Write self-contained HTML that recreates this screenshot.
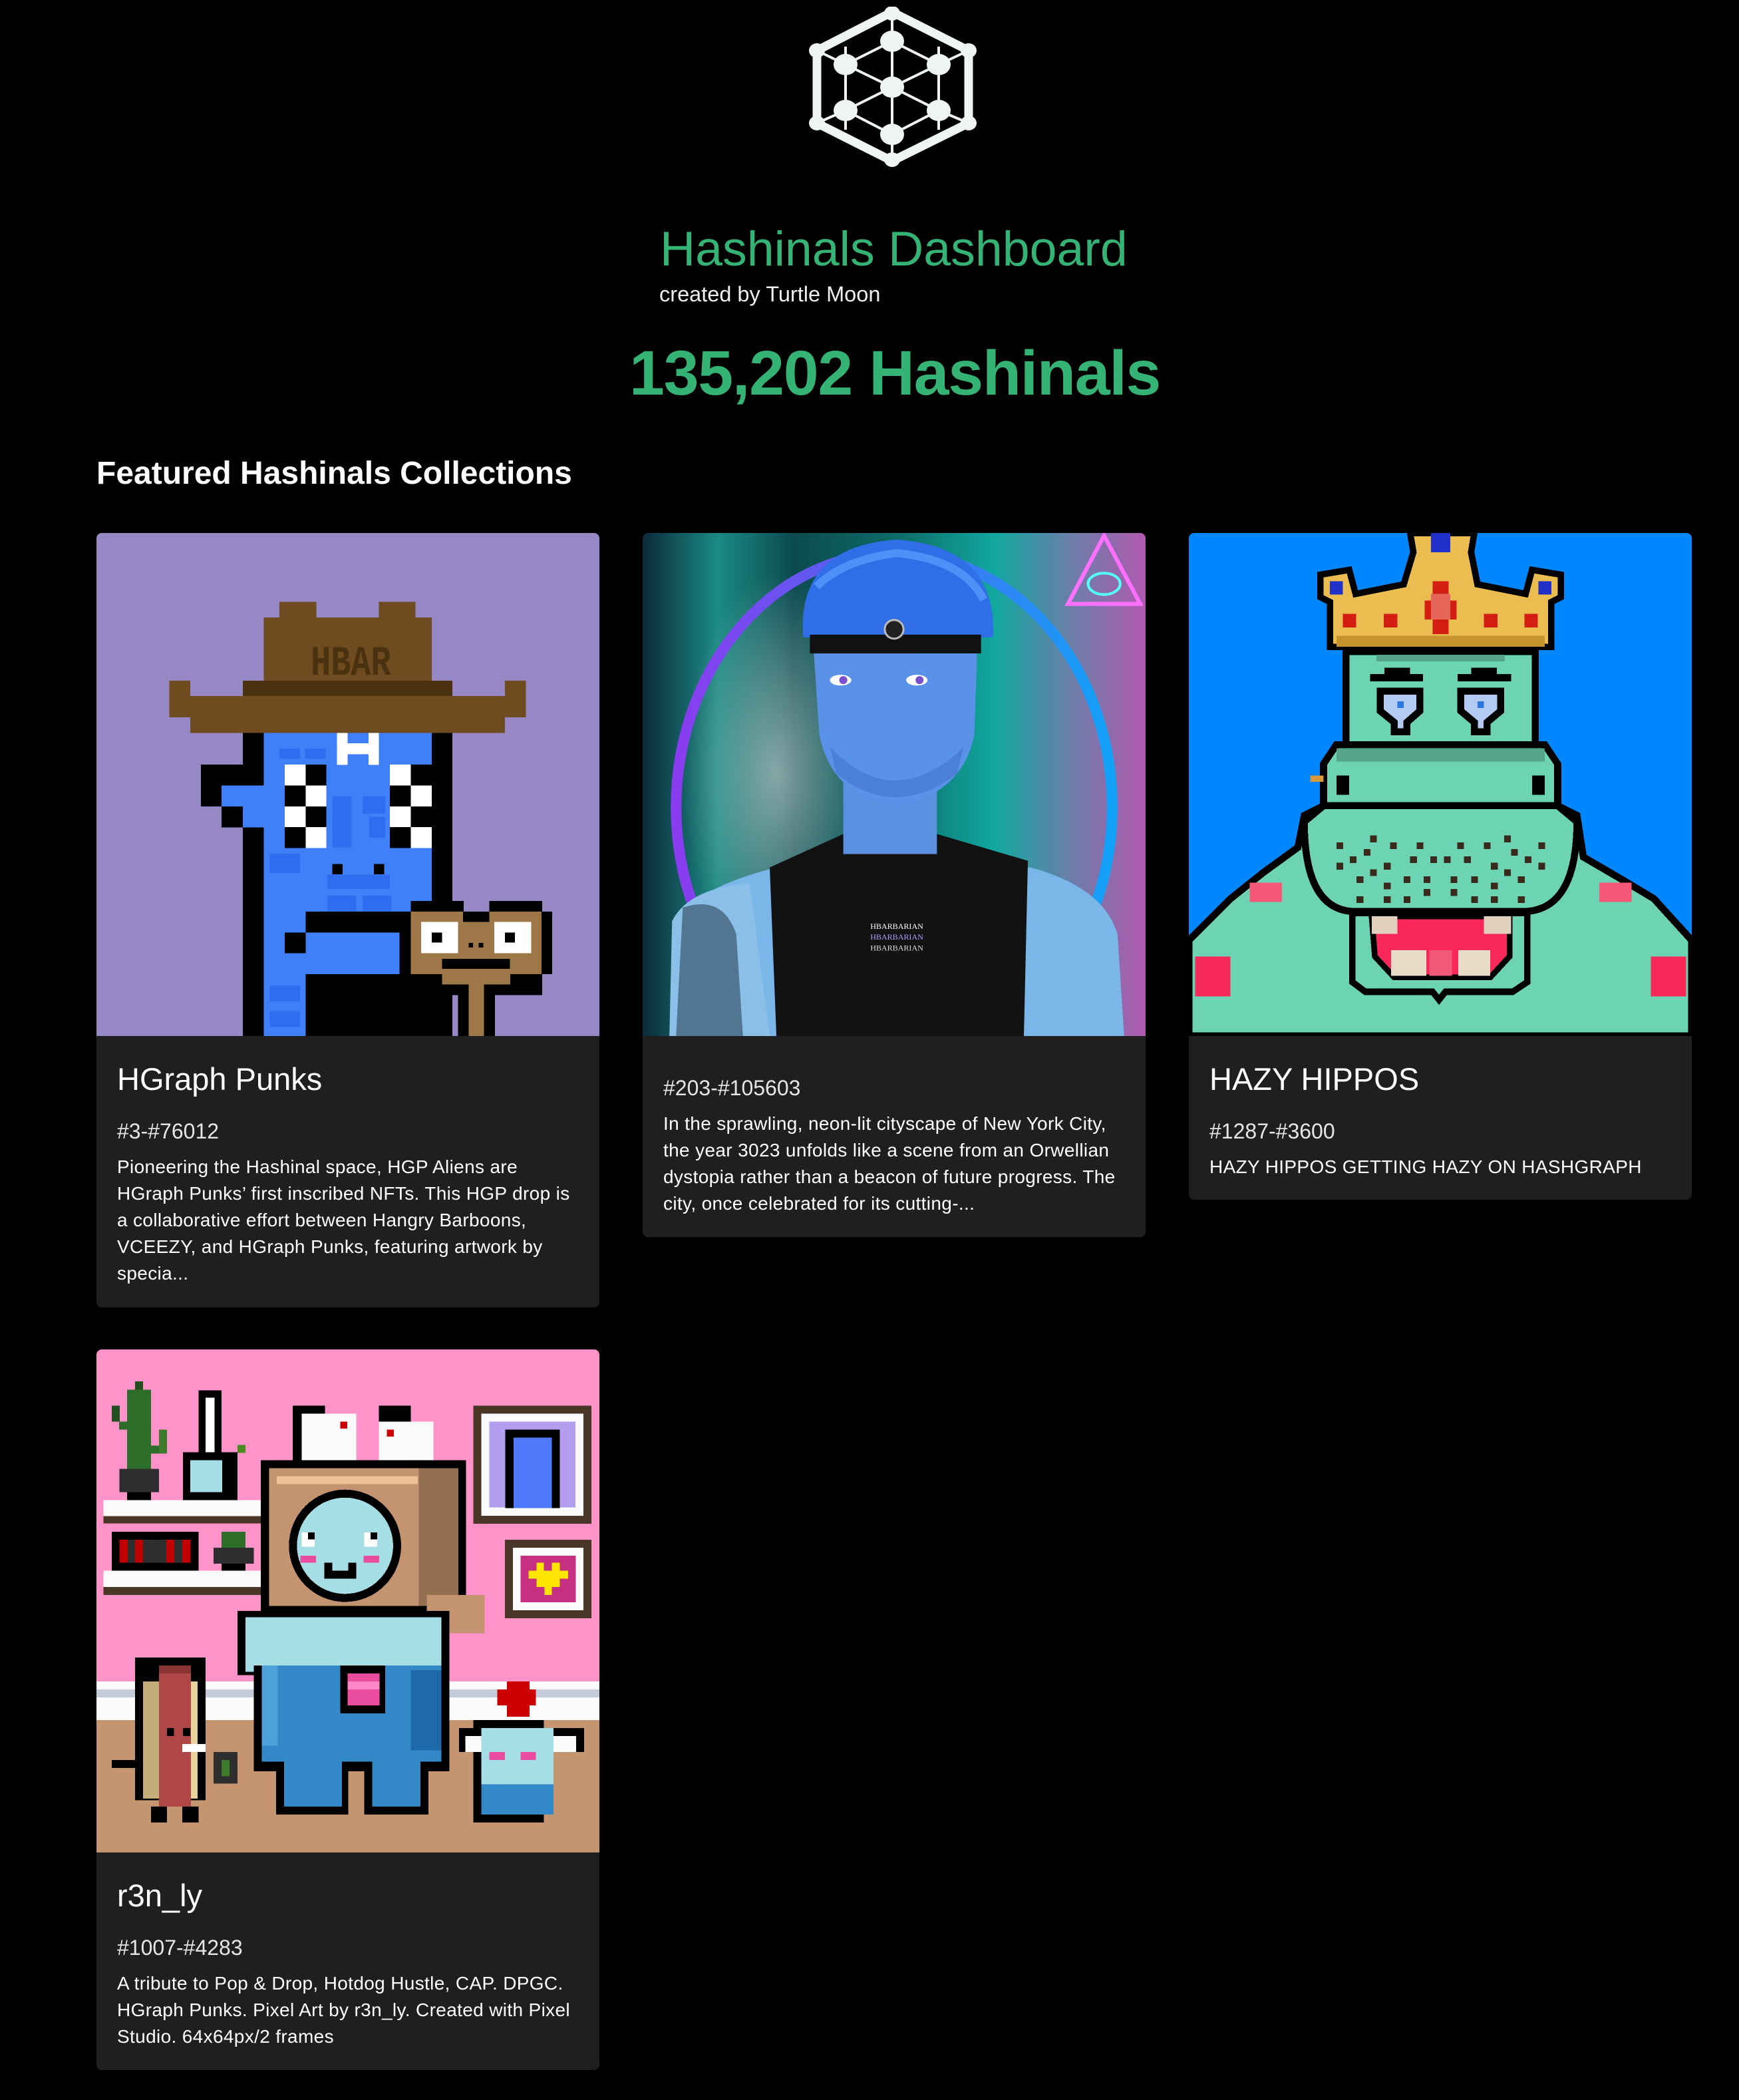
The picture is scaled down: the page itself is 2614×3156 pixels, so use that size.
<!DOCTYPE html>
<html><head><meta charset="utf-8">
<style>
*{margin:0;padding:0;box-sizing:border-box}
html,body{width:2614px;height:3156px;background:#000;overflow:hidden}
body{position:relative;font-family:"Liberation Sans",Arial,sans-serif;color:#fff}
.abs{position:absolute;line-height:1;white-space:nowrap}
.card{position:absolute;width:756px;background:#1f1f1f;border-radius:8px;overflow:hidden}
.card svg{display:block;width:756px;height:756px}
.name{position:absolute;left:31px;top:797px;font-size:47px;line-height:1;white-space:nowrap}
.id{position:absolute;left:31px;top:883px;font-size:32px;line-height:1;color:#e6e6e6;white-space:nowrap}
.desc{position:absolute;left:31px;top:933px;font-size:28px;letter-spacing:0.35px;line-height:40px;white-space:nowrap}
</style></head><body>

<svg class="abs" style="left:1216px;top:10px" width="255" height="242" viewBox="0 0 255 242">
<g stroke="#eef4ef" fill="none">
<g stroke-width="13" stroke-linecap="butt">
<line x1="125" y1="8" x2="12" y2="66"/><line x1="125" y1="8" x2="240" y2="66"/>
<line x1="12" y1="66" x2="12" y2="175"/><line x1="240" y1="66" x2="240" y2="175"/>
<line x1="12" y1="175" x2="125" y2="232"/><line x1="240" y1="175" x2="125" y2="232"/>
</g>
<g stroke-width="4">
<line x1="125" y1="8" x2="125" y2="232"/>
<line x1="55" y1="87" x2="125" y2="52"/><line x1="195" y1="87" x2="125" y2="52"/>
<line x1="55" y1="87" x2="125" y2="121"/><line x1="195" y1="87" x2="125" y2="121"/>
<line x1="55" y1="156" x2="125" y2="121"/><line x1="195" y1="156" x2="125" y2="121"/>
<line x1="55" y1="156" x2="125" y2="192"/><line x1="195" y1="156" x2="125" y2="192"/>
<line x1="55" y1="87" x2="55" y2="156"/><line x1="195" y1="87" x2="195" y2="156"/>
<line x1="12" y1="66" x2="55" y2="87"/><line x1="240" y1="66" x2="195" y2="87"/>
<line x1="12" y1="175" x2="55" y2="156"/><line x1="240" y1="175" x2="195" y2="156"/>
<line x1="55" y1="60" x2="55" y2="87"/><line x1="195" y1="60" x2="195" y2="87"/>
<line x1="55" y1="156" x2="55" y2="185"/><line x1="195" y1="156" x2="195" y2="185"/>
</g></g>
<g fill="#eef4ef">
<ellipse cx="125" cy="10" rx="12" ry="11"/><ellipse cx="12" cy="66" rx="12" ry="11"/><ellipse cx="240" cy="66" rx="12" ry="11"/>
<ellipse cx="12" cy="175" rx="12" ry="11"/><ellipse cx="240" cy="175" rx="12" ry="11"/><ellipse cx="125" cy="230" rx="12" ry="11"/>
<ellipse cx="125" cy="52" rx="18" ry="16"/><ellipse cx="55" cy="87" rx="18" ry="16"/><ellipse cx="195" cy="87" rx="18" ry="16"/>
<ellipse cx="125" cy="121" rx="18" ry="16"/><ellipse cx="55" cy="156" rx="18" ry="16"/><ellipse cx="195" cy="156" rx="18" ry="16"/>
<ellipse cx="125" cy="192" rx="18" ry="16"/>
</g></svg>

<div class="abs" style="left:992px;top:337px;font-size:73.5px;color:#35b374">Hashinals Dashboard</div>
<div class="abs" style="left:991px;top:426px;font-size:32.5px;color:#f0f0f0">created by Turtle Moon</div>
<div class="abs" style="left:946px;top:514px;font-size:95px;font-weight:bold;color:#35b374;letter-spacing:-1.2px">135,202 Hashinals</div>
<div class="abs" style="left:145px;top:688px;font-size:48px;font-weight:bold">Featured Hashinals Collections</div>

<!-- Card 1 -->
<div class="card" style="left:145px;top:801px;height:1164px">
<svg viewBox="0 0 1568 1568" shape-rendering="crispEdges">
<rect width="1568" height="1568" fill="#9688c5"/>
<rect x="570" y="215" width="115" height="60" fill="#6f4c20"/><rect x="880" y="215" width="115" height="60" fill="#6f4c20"/>
<rect x="522" y="263" width="523" height="200" fill="#6f4c20"/>
<text x="668" y="442" font-family="Liberation Mono,monospace" font-weight="bold" font-size="130" fill="#4a3210" textLength="250" lengthAdjust="spacingAndGlyphs">HBAR</text>
<rect x="456" y="460" width="654" height="50" fill="#4a3210"/>
<rect x="227" y="460" width="65" height="115" fill="#6f4c20"/><rect x="1273" y="460" width="66" height="115" fill="#6f4c20"/>
<rect x="227" y="508" width="1112" height="67" fill="#6f4c20"/><rect x="292" y="560" width="981" height="63" fill="#6f4c20"/>
<rect x="456" y="623" width="654" height="945" fill="#000"/>
<rect x="326" y="722" width="200" height="130" fill="#000"/><rect x="390" y="850" width="70" height="68" fill="#000"/>
<rect x="390" y="787" width="136" height="65" fill="#3f7ff8"/><rect x="456" y="850" width="70" height="68" fill="#3f7ff8"/>
<rect x="522" y="623" width="523" height="560" fill="#3f7ff8"/>
<rect x="522" y="1180" width="130" height="388" fill="#3f7ff8"/>
<rect x="652" y="1245" width="295" height="130" fill="#3f7ff8"/>
<g fill="#2f6cf0"><rect x="570" y="672" width="65" height="32"/><rect x="650" y="672" width="65" height="32"/><rect x="735" y="820" width="60" height="160"/><rect x="830" y="820" width="70" height="55"/><rect x="850" y="885" width="50" height="65"/><rect x="540" y="1000" width="95" height="60"/><rect x="720" y="1065" width="195" height="45"/><rect x="540" y="1410" width="95" height="50"/><rect x="540" y="1490" width="95" height="50"/><rect x="720" y="1130" width="90" height="50"/><rect x="830" y="1130" width="90" height="50"/></g>
<rect x="750" y="623" width="130" height="100" fill="#fff"/><rect x="783" y="623" width="65" height="32" fill="#3f7ff8"/><rect x="783" y="690" width="65" height="33" fill="#3f7ff8"/>
<g fill="#fff"><rect x="587" y="722" width="65" height="65"/><rect x="652" y="787" width="65" height="65"/><rect x="587" y="852" width="65" height="65"/><rect x="652" y="917" width="65" height="65"/>
<rect x="915" y="722" width="65" height="65"/><rect x="980" y="787" width="65" height="65"/><rect x="915" y="852" width="65" height="65"/><rect x="980" y="917" width="65" height="65"/></g>
<g fill="#000"><rect x="652" y="722" width="65" height="65"/><rect x="587" y="787" width="65" height="65"/><rect x="652" y="852" width="65" height="65"/><rect x="587" y="917" width="65" height="65"/>
<rect x="980" y="722" width="65" height="65"/><rect x="915" y="787" width="65" height="65"/><rect x="980" y="852" width="65" height="65"/><rect x="915" y="917" width="65" height="65"/>
<rect x="735" y="1032" width="32" height="32"/><rect x="865" y="1032" width="32" height="32"/>
<rect x="652" y="1180" width="330" height="65"/><rect x="587" y="1245" width="65" height="65"/>
<rect x="652" y="1375" width="330" height="65"/><rect x="652" y="1440" width="65" height="128"/>
<rect x="945" y="1245" width="40" height="140"/>
<rect x="980" y="1147" width="165" height="35"/><rect x="1225" y="1147" width="165" height="35"/>
<rect x="1388" y="1180" width="33" height="195"/>
<rect x="1127" y="1405" width="115" height="163"/><rect x="1077" y="1375" width="50" height="65"/><rect x="1240" y="1375" width="150" height="65"/></g>
<rect x="980" y="1180" width="408" height="195" fill="#9e7748"/>
<rect x="1143" y="1180" width="82" height="32" fill="#000"/>
<rect x="1077" y="1375" width="213" height="32" fill="#9e7748"/>
<rect x="1160" y="1405" width="48" height="163" fill="#9e7748"/>
<rect x="1012" y="1212" width="115" height="98" fill="#fff"/><rect x="1240" y="1212" width="115" height="98" fill="#fff"/>
<rect x="1045" y="1245" width="32" height="32" fill="#000"/><rect x="1273" y="1245" width="32" height="32" fill="#000"/>
<rect x="1077" y="1327" width="212" height="32" fill="#000"/>
<rect x="1160" y="1278" width="14" height="14" fill="#000"/><rect x="1192" y="1278" width="14" height="14" fill="#000"/>
</svg>
<div class="name">HGraph Punks</div>
<div class="id">#3-#76012</div>
<div class="desc">Pioneering the Hashinal space, HGP Aliens are<br>HGraph Punks’ first inscribed NFTs. This HGP drop is<br>a collaborative effort between Hangry Barboons,<br>VCEEZY, and HGraph Punks, featuring artwork by<br>specia...</div>
</div>

<!-- Card 2 -->
<div class="card" style="left:966px;top:801px;height:1058px">
<svg viewBox="0 0 376 376">
<defs>
<linearGradient id="bg2" x1="0" x2="1" y1="0" y2="0">
<stop offset="0" stop-color="#0c2a3a"/><stop offset=".15" stop-color="#1a8b84"/><stop offset=".3" stop-color="#0b4a4f"/><stop offset=".5" stop-color="#0d6a66"/><stop offset=".7" stop-color="#11a8a0"/><stop offset=".85" stop-color="#6a7fa8"/><stop offset="1" stop-color="#b05ab0"/></linearGradient>
<linearGradient id="ring" x1="0" x2="1"><stop offset="0" stop-color="#8a3cf0"/><stop offset=".5" stop-color="#4a6af0"/><stop offset="1" stop-color="#12a2f8"/></linearGradient>
<radialGradient id="glow" cx=".5" cy=".5" r=".5"><stop offset="0" stop-color="#b8c8c8" stop-opacity=".7"/><stop offset="1" stop-color="#b8c8c8" stop-opacity="0"/></radialGradient>
</defs>
<rect width="376" height="376" fill="url(#bg2)"/>
<ellipse cx="100" cy="180" rx="70" ry="150" fill="url(#glow)"/>
<ellipse cx="188" cy="205" rx="163" ry="190" fill="none" stroke="url(#ring)" stroke-width="8"/>
<path d="M20 376 L25 290 Q40 265 100 250 L290 250 Q345 265 355 300 L360 376Z" fill="#7ab6e8"/>
<path d="M95 250 L150 225 L220 225 L288 245 L285 376 L100 376Z" fill="#121212"/>
<path d="M20 376 L22 290 Q35 265 80 262 L95 376Z" fill="#8ac0e8"/>
<text x="190" y="296" font-size="6" fill="#fff" text-anchor="middle" font-family="Liberation Serif,serif">HBARBARIAN</text>
<text x="190" y="304" font-size="6" fill="#a8a0ff" text-anchor="middle" font-family="Liberation Serif,serif">HBARBARIAN</text>
<text x="190" y="312" font-size="6" fill="#ddd" text-anchor="middle" font-family="Liberation Serif,serif">HBARBARIAN</text>
<rect x="150" y="180" width="70" height="60" fill="#5b8fe0"/>
<path d="M128 90 L250 90 L248 150 Q240 195 188 205 Q140 195 132 150Z" fill="#5a92e8"/>
<path d="M140 160 Q188 210 240 160 L235 180 Q188 215 145 180Z" fill="#4c7fd6"/>
<ellipse cx="148" cy="110" rx="8" ry="4" fill="#fff"/><ellipse cx="205" cy="110" rx="8" ry="4" fill="#fff"/>
<circle cx="150" cy="110" r="3" fill="#7a4fd0"/><circle cx="207" cy="110" r="3" fill="#7a4fd0"/>
<path d="M120 78 Q115 10 190 5 Q265 10 262 78 Z" fill="#2f6ee6"/>
<path d="M130 40 Q150 20 190 15 Q240 20 255 50" stroke="#4f8ff8" stroke-width="6" fill="none"/>
<rect x="125" y="76" width="128" height="14" fill="#111"/>
<circle cx="188" cy="72" r="7" fill="#222" stroke="#bbb" stroke-width="1.5"/>
<path d="M345 2 L372 53 L318 53Z" fill="none" stroke="#ff70ff" stroke-width="3"/>
<ellipse cx="345" cy="38" rx="12" ry="8" fill="none" stroke="#5ff" stroke-width="2"/>
<path d="M30 280 Q60 270 70 300 L75 376 L25 376Z" fill="#1a2a3a" opacity=".5"/>
</svg>
<div class="id" style="top:818px">#203-#105603</div>
<div class="desc" style="top:868px">In the sprawling, neon-lit cityscape of New York City,<br>the year 3023 unfolds like a scene from an Orwellian<br>dystopia rather than a beacon of future progress. The<br>city, once celebrated for its cutting-...</div>
</div>

<!-- Card 3 -->
<div class="card" style="left:1787px;top:801px;height:1002px">
<svg viewBox="0 0 1568 1568" shape-rendering="crispEdges">
<rect width="1568" height="1568" fill="#0086ff"/>
<path d="M0 1270 L130 1140 L230 1060 L340 980 L360 880 L420 850 L420 720 L460 660 L1110 660 L1150 720 L1150 850 L1210 880 L1230 1010 L1350 1080 L1450 1140 L1568 1270 L1568 1568 L0 1568Z" fill="#6cd4b2" stroke="#000" stroke-width="22"/>
<path d="M360 900 Q360 1180 520 1180 L1040 1180 Q1210 1180 1210 900 L1150 850 L420 850Z" fill="#6cd4b2" stroke="#000" stroke-width="22"/>
<rect x="460" y="672" width="650" height="40" fill="#55a58a"/>
<rect x="490" y="370" width="590" height="290" fill="#6cd4b2" stroke="#000" stroke-width="22"/>
<rect x="585" y="380" width="400" height="20" fill="#55a58a"/>
<rect x="565" y="440" width="165" height="22" fill="#000"/><rect x="610" y="420" width="80" height="22" fill="#000"/>
<rect x="838" y="440" width="167" height="22" fill="#000"/><rect x="880" y="420" width="80" height="22" fill="#000"/>
<path d="M597 493 L720 493 L720 555 L680 590 L680 620 L640 620 L640 590 L597 555Z" fill="#b3cbf3" stroke="#000" stroke-width="22"/>
<path d="M848 493 L972 493 L972 555 L930 590 L930 620 L890 620 L890 590 L848 555Z" fill="#b3cbf3" stroke="#000" stroke-width="22"/>
<rect x="650" y="525" width="20" height="20" fill="#2a78e0"/><rect x="900" y="525" width="20" height="20" fill="#2a78e0"/>
<path d="M440 355 L440 215 L410 200 L410 130 L500 115 L520 190 L670 160 L700 60 L690 0 L890 0 L880 60 L900 160 L1050 190 L1070 115 L1160 130 L1160 200 L1130 215 L1130 355Z" fill="#ebbd50" stroke="#000" stroke-width="20"/>
<rect x="460" y="320" width="650" height="35" fill="#c6922a"/>
<path d="M760 150 L810 150 L810 210 L835 210 L835 270 L810 270 L810 315 L760 315 L760 270 L735 270 L735 210 L760 210Z" fill="#d41e14"/>
<rect x="755" y="190" width="60" height="80" fill="#e6675a"/>
<g fill="#d41e14"><rect x="480" y="252" width="42" height="42"/><rect x="608" y="252" width="42" height="42"/><rect x="920" y="252" width="42" height="42"/><rect x="1046" y="252" width="42" height="42"/></g>
<rect x="755" y="0" width="60" height="60" fill="#2030c8"/><rect x="440" y="150" width="40" height="42" fill="#2030c8"/><rect x="1090" y="150" width="40" height="42" fill="#2030c8"/>
<rect x="378" y="756" width="42" height="20" fill="#d69a3a"/>
<rect x="460" y="756" width="40" height="60" fill="#000"/><rect x="1070" y="756" width="40" height="60" fill="#000"/>
<g fill="#3a2a1c">
<rect x="565" y="943" width="21" height="21"/><rect x="627" y="964" width="21" height="21"/><rect x="710" y="964" width="21" height="21"/><rect x="837" y="964" width="21" height="21"/><rect x="920" y="964" width="21" height="21"/><rect x="983" y="943" width="21" height="21"/>
<rect x="460" y="964" width="21" height="21"/><rect x="545" y="985" width="21" height="21"/><rect x="1090" y="964" width="21" height="21"/><rect x="1005" y="985" width="21" height="21"/>
<rect x="502" y="1008" width="21" height="21"/><rect x="690" y="1008" width="21" height="21"/><rect x="753" y="1008" width="21" height="21"/><rect x="795" y="1008" width="21" height="21"/><rect x="858" y="1008" width="21" height="21"/><rect x="1047" y="1008" width="21" height="21"/>
<rect x="460" y="1028" width="21" height="21"/><rect x="608" y="1028" width="21" height="21"/><rect x="942" y="1028" width="21" height="21"/><rect x="1090" y="1028" width="21" height="21"/>
<rect x="565" y="1048" width="21" height="21"/><rect x="983" y="1048" width="21" height="21"/>
<rect x="523" y="1070" width="21" height="21"/><rect x="670" y="1070" width="21" height="21"/><rect x="732" y="1070" width="21" height="21"/><rect x="816" y="1070" width="21" height="21"/><rect x="880" y="1070" width="21" height="21"/><rect x="1026" y="1070" width="21" height="21"/>
<rect x="608" y="1090" width="21" height="21"/><rect x="942" y="1090" width="21" height="21"/><rect x="732" y="1110" width="21" height="21"/><rect x="816" y="1110" width="21" height="21"/>
<rect x="523" y="1132" width="21" height="21"/><rect x="608" y="1132" width="21" height="21"/><rect x="670" y="1132" width="21" height="21"/><rect x="880" y="1132" width="21" height="21"/><rect x="942" y="1132" width="21" height="21"/><rect x="1026" y="1132" width="21" height="21"/>
</g>
<path d="M510 1185 L1055 1185 L1055 1400 L1010 1430 L800 1430 L780 1455 L760 1430 L550 1430 L510 1400Z" fill="#6cd4b2" stroke="#000" stroke-width="20"/>
<path d="M570 1195 L1000 1195 L1000 1320 L940 1385 L640 1385 L580 1320Z" fill="#f9285a" stroke="#000" stroke-width="18"/>
<rect x="570" y="1195" width="80" height="55" fill="#e0d0bc"/><rect x="920" y="1195" width="85" height="55" fill="#e0d0bc"/>
<rect x="630" y="1300" width="110" height="80" fill="#e8dcc8"/><rect x="840" y="1300" width="100" height="80" fill="#e8dcc8"/>
<rect x="750" y="1300" width="70" height="80" fill="#f25878"/>
<rect x="190" y="1090" width="100" height="60" fill="#f85878"/><rect x="1280" y="1090" width="100" height="60" fill="#f85878"/>
<rect x="20" y="1320" width="110" height="125" fill="#f82a5a"/><rect x="1440" y="1320" width="110" height="125" fill="#f82a5a"/>
</svg>
<div class="name">HAZY HIPPOS</div>
<div class="id">#1287-#3600</div>
<div class="desc">HAZY HIPPOS GETTING HAZY ON HASHGRAPH</div>
</div>

<!-- Card 4 -->
<div class="card" style="left:145px;top:2028px;height:1083px">
<svg viewBox="0 0 1568 1568" shape-rendering="crispEdges">
<rect width="1568" height="1568" fill="#fe93ca"/>
<rect y="1035" width="1568" height="120" fill="#fafafa"/><rect y="1060" width="1568" height="25" fill="#c4ccdc"/>
<rect y="1155" width="1568" height="413" fill="#c4956f"/>
<rect x="22" y="470" width="490" height="50" fill="#fafafa"/><rect x="22" y="520" width="490" height="22" fill="#4a3626"/>
<rect x="22" y="690" width="490" height="50" fill="#fafafa"/><rect x="22" y="740" width="490" height="25" fill="#4a3626"/>
<rect x="95" y="125" width="75" height="248" fill="#2d6e2a"/><rect x="120" y="100" width="25" height="25" fill="#224f1f"/>
<rect x="48" y="175" width="25" height="50" fill="#224f1f"/><rect x="70" y="225" width="40" height="25" fill="#2d6e2a"/>
<rect x="170" y="300" width="25" height="25" fill="#2d6e2a"/><rect x="195" y="250" width="25" height="75" fill="#3d7a2a"/>
<rect x="72" y="372" width="123" height="73" fill="#2e2e2e"/><rect x="95" y="445" width="75" height="25" fill="#000"/>
<rect x="318" y="128" width="72" height="210" fill="#000"/><rect x="340" y="150" width="28" height="180" fill="#fff"/>
<rect x="270" y="320" width="170" height="150" fill="#000"/><rect x="292" y="345" width="100" height="100" fill="#a6dee6"/>
<rect x="440" y="298" width="25" height="25" fill="#4a8a1f"/>
<rect x="48" y="568" width="270" height="122" fill="#000"/><rect x="72" y="593" width="220" height="72" fill="#2e2e2e"/>
<g fill="#c00000"><rect x="72" y="593" width="25" height="72"/><rect x="120" y="593" width="25" height="72"/><rect x="218" y="593" width="25" height="72"/><rect x="268" y="593" width="25" height="72"/></g>
<rect x="390" y="568" width="75" height="50" fill="#2d6e2a"/><rect x="365" y="618" width="125" height="50" fill="#2e2e2e"/><rect x="390" y="668" width="75" height="22" fill="#000"/>
<rect x="1175" y="175" width="368" height="368" fill="#4a3626"/><rect x="1200" y="200" width="318" height="318" fill="#fafafa"/><rect x="1225" y="225" width="268" height="268" fill="#b39ef0"/>
<rect x="1275" y="250" width="170" height="245" fill="#000"/><rect x="1300" y="275" width="120" height="220" fill="#4f79fb"/>
<rect x="1273" y="593" width="270" height="245" fill="#4a3626"/><rect x="1298" y="618" width="220" height="195" fill="#fafafa"/><rect x="1322" y="643" width="172" height="145" fill="#c62f82"/>
<path d="M1372 665 L1395 665 L1395 690 L1420 690 L1420 665 L1445 665 L1445 690 L1470 690 L1470 715 L1445 715 L1445 740 L1420 740 L1420 765 L1397 765 L1397 740 L1372 740 L1372 715 L1347 715 L1347 690 L1372 690Z" fill="#ffe500"/>
<rect x="612" y="175" width="100" height="175" fill="#000"/><rect x="880" y="175" width="100" height="175" fill="#000"/>
<rect x="640" y="200" width="170" height="150" fill="#fafafa"/><rect x="880" y="225" width="170" height="150" fill="#fafafa"/>
<rect x="760" y="225" width="22" height="22" fill="#c00"/><rect x="905" y="250" width="22" height="22" fill="#c00"/>
<rect x="512" y="345" width="640" height="480" fill="#000"/>
<rect x="538" y="370" width="590" height="430" fill="#c3946f"/><rect x="1005" y="370" width="123" height="430" fill="#93704f"/>
<rect x="562" y="395" width="440" height="25" fill="#eec096"/>
<circle cx="775" cy="612" r="175" fill="#000"/><circle cx="775" cy="612" r="150" fill="#a6dee6"/>
<rect x="640" y="570" width="40" height="45" fill="#fff"/><rect x="835" y="570" width="40" height="45" fill="#fff"/>
<rect x="660" y="570" width="20" height="22" fill="#000"/><rect x="855" y="570" width="20" height="22" fill="#000"/>
<rect x="636" y="643" width="48" height="22" fill="#ea4ca0"/><rect x="833" y="643" width="48" height="22" fill="#ea4ca0"/>
<rect x="710" y="665" width="100" height="50" fill="#000"/><rect x="735" y="665" width="50" height="25" fill="#a6dee6"/>
<rect x="1030" y="765" width="180" height="120" fill="#c3946f"/>
<rect x="440" y="815" width="660" height="200" fill="#000"/><rect x="465" y="835" width="610" height="170" fill="#a6dee6"/>
<rect x="490" y="985" width="610" height="330" fill="#000"/><rect x="515" y="985" width="560" height="300" fill="#3388c8"/>
<rect x="515" y="985" width="50" height="250" fill="#4fa1dc"/><rect x="980" y="1000" width="95" height="250" fill="#1e6aa8"/>
<rect x="760" y="985" width="140" height="150" fill="#000"/><rect x="783" y="1010" width="100" height="100" fill="#ea4ca0"/><rect x="783" y="1035" width="100" height="25" fill="#ff88c8"/>
<rect x="560" y="1285" width="225" height="165" fill="#000"/><rect x="585" y="1285" width="180" height="140" fill="#3388c8"/>
<rect x="835" y="1285" width="200" height="165" fill="#000"/><rect x="860" y="1285" width="150" height="140" fill="#3388c8"/>
<rect x="610" y="1425" width="150" height="25" fill="#000"/><rect x="858" y="1425" width="150" height="25" fill="#000"/>
<rect x="120" y="960" width="220" height="445" fill="#000"/><rect x="145" y="1035" width="170" height="365" fill="#e8d49a"/>
<rect x="145" y="1035" width="50" height="365" fill="#c3ad78"/>
<rect x="195" y="985" width="100" height="440" fill="#b04747"/><rect x="195" y="985" width="100" height="25" fill="#8a3434"/>
<rect x="220" y="1180" width="22" height="25" fill="#000"/><rect x="270" y="1180" width="22" height="25" fill="#000"/><rect x="268" y="1230" width="72" height="25" fill="#fff"/>
<rect x="170" y="1425" width="50" height="50" fill="#000"/><rect x="268" y="1425" width="50" height="50" fill="#000"/>
<rect x="365" y="1255" width="75" height="98" fill="#2e2e2e"/><rect x="390" y="1280" width="25" height="50" fill="#3d7a2a"/>
<rect x="48" y="1280" width="72" height="25" fill="#000"/>
<rect x="1280" y="1035" width="70" height="110" fill="#c00"/><rect x="1250" y="1060" width="120" height="50" fill="#c00"/>
<rect x="1130" y="1180" width="390" height="75" fill="#000"/><rect x="1175" y="1155" width="220" height="320" fill="#000"/>
<rect x="1150" y="1205" width="345" height="50" fill="#fafafa"/>
<rect x="1200" y="1180" width="225" height="175" fill="#a6dee6"/><rect x="1200" y="1355" width="225" height="95" fill="#3388c8"/>
<rect x="1225" y="1255" width="48" height="25" fill="#ea4ca0"/><rect x="1322" y="1255" width="48" height="25" fill="#ea4ca0"/>
<rect x="1250" y="1450" width="145" height="25" fill="#000"/>
</svg>
<div class="name">r3n_ly</div>
<div class="id">#1007-#4283</div>
<div class="desc">A tribute to Pop &amp; Drop, Hotdog Hustle, CAP. DPGC.<br>HGraph Punks. Pixel Art by r3n_ly. Created with Pixel<br>Studio. 64x64px/2 frames</div>
</div>

</body></html>
